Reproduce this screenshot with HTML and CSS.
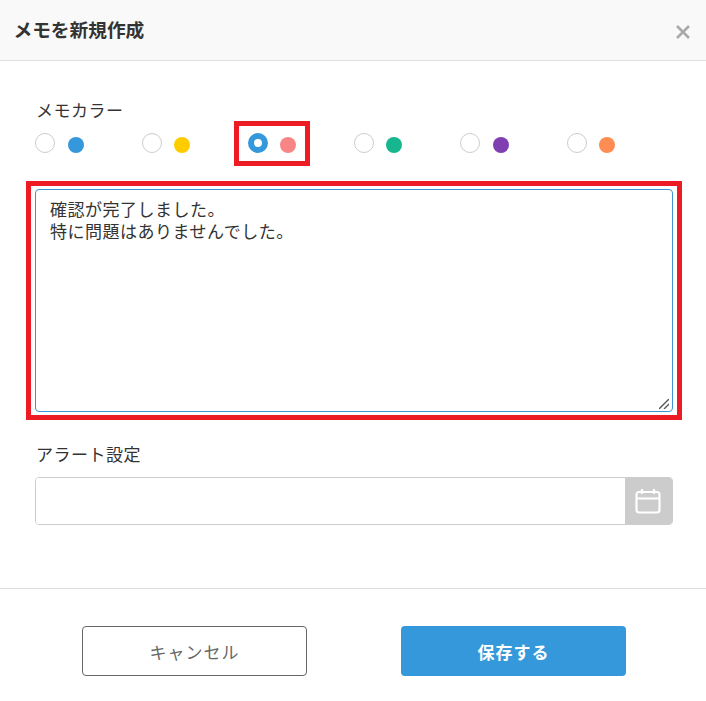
FILE: index.html
```html
<!DOCTYPE html>
<html lang="ja">
<head>
  <meta charset="UTF-8" />
  <meta name="viewport" content="width=device-width, initial-scale=1.0" />
  <title>メモを新規作成</title>
  <link rel="stylesheet" href="styles.css">
</head>
<body>
  <div class="modal">
    <div class="modal-header">
      <h1>メモを新規作成</h1>
      <svg class="close" viewBox="0 0 14 14" width="14" height="14"><path d="M1 1L13 13M13 1L1 13" /></svg>
    </div>

    <div class="modal-body">
      <div class="field-label">メモカラー</div>
      <div class="colors">
        <label class="color"><span class="radio"></span><span class="dot blue"></span></label>
        <label class="color"><span class="radio"></span><span class="dot yellow"></span></label>
        <label class="color"><span class="radio checked"></span><span class="dot pink"></span></label>
        <label class="color"><span class="radio"></span><span class="dot green"></span></label>
        <label class="color"><span class="radio"></span><span class="dot purple"></span></label>
        <label class="color"><span class="radio"></span><span class="dot orange"></span></label>
      </div>

      <div class="memo-wrap">
        <textarea class="memo">確認が完了しました。
特に問題はありませんでした。</textarea>
        <svg class="grip" viewBox="0 0 10 10" width="10" height="10"><path d="M0 10L10 0M5 10L10 5" /></svg>
      </div>

      <div class="field-label alert-label">アラート設定</div>
      <div class="date-input">
        <input type="text" />
        <span class="calendar">
          <svg viewBox="0 0 26 26" width="26" height="26">
            <rect x="1.5" y="4" width="23" height="20.5" rx="2.5" />
            <path d="M1.5 10.5H24.5M7 1V6M19 1V6" />
          </svg>
        </span>
      </div>
    </div>

    <div class="modal-footer">
      <button class="btn cancel">キャンセル</button>
      <button class="btn save">保存する</button>
    </div>

    <!-- red annotation frames -->
    <div class="mark mark-radio"></div>
    <div class="mark mark-memo"></div>
  </div>
</body>
</html>
```

FILE: styles.css
```css
* {
  box-sizing: border-box;
}

body {
  font-family: "Noto Sans CJK JP", "Noto Sans", sans-serif;
  background-color: #fff;
  color: #333;
  margin: 0;
}

.modal {
  position: relative;
  width: 706px;
  height: 701px;
  overflow: hidden;
}

.modal-header {
  height: 61px;
  padding: 0 16px 3px 13.5px;
  background-color: #f9f9f9;
  border-bottom: 1px solid #ddd;
  display: flex;
  align-items: center;
  justify-content: space-between;
}

.modal-header h1 {
  margin: 0;
  font-size: 18.7px;
  font-weight: 700;
  color: #333;
}

.close {
  margin-top: 7px;
  fill: none;
  stroke: #aaa;
  stroke-width: 2.6;
}

.modal-body {
  padding: 37px 33px 0 35px;
  height: 528px;
  border-bottom: 1px solid #ddd;
}

.field-label {
  font-size: 17px;
  line-height: 24px;
  letter-spacing: 0.5px;
  padding-left: 1px;
}

.colors {
  display: grid;
  grid-template-columns: repeat(6, 1fr);
  height: 24px;
  margin-top: 10px;
  padding-left: 0.3px;
}

.color {
  display: flex;
  align-items: center;
  gap: 12.3px;
}

.radio {
  width: 20px;
  height: 20px;
  border-radius: 50%;
  border: 1.5px solid #ccc;
  background-color: #fff;
  margin-top: -2px;
}

.radio.checked {
  border: 6px solid #3498db;
}

.dot {
  width: 16px;
  height: 16px;
  border-radius: 50%;
  margin-top: 2px;
}

.blue { background-color: #3498db; }
.yellow { background-color: #ffcc00; }
.pink { background-color: #f78585; }
.green { background-color: #16b78f; }
.purple { background-color: #7f3fb0; }
.orange { background-color: #ff8c52; }

.memo-wrap {
  position: relative;
  width: 638px;
  height: 223px;
  margin-top: 33px;
}

.memo {
  display: block;
  width: 100%;
  height: 100%;
  padding: 8px 14px;
  border: 1px solid #3d94d0;
  border-radius: 4px;
  font-family: inherit;
  font-size: 17px;
  line-height: 21.5px;
  letter-spacing: 0.5px;
  color: #333;
  outline: none;
  resize: none;
}

.grip {
  position: absolute;
  right: 4px;
  bottom: 3px;
  fill: none;
  stroke: #555;
  stroke-width: 1.4;
}

.alert-label {
  margin-top: 30px;
}

.date-input {
  display: flex;
  width: 638px;
  height: 48px;
  margin-top: 11px;
  border: 1px solid #ccc;
  border-radius: 4px;
  overflow: hidden;
}

.date-input input {
  flex: 1;
  min-width: 0;
  border: none;
  outline: none;
}

.calendar {
  width: 48px;
  margin: -1px -1px -1px 0;
  padding-right: 2px;
  background-color: #ccc;
  display: flex;
  align-items: center;
  justify-content: center;
}

.calendar svg {
  fill: none;
  stroke: #fff;
  stroke-width: 2.2;
}

.modal-footer {
  display: flex;
  justify-content: center;
  gap: 94px;
  padding: 37px 0 0 2px;
}

.btn {
  width: 225px;
  height: 50px;
  border-radius: 4px;
  font-family: inherit;
  font-size: 17px;
  letter-spacing: 1px;
  cursor: pointer;
}

.cancel {
  background-color: #fff;
  border: 1px solid #666;
  color: #666;
  padding-left: 6px;
}

.save {
  background-color: #3498db;
  border: none;
  color: #fff;
  font-weight: 700;
}

.mark {
  position: absolute;
  border: 5px solid #ed1c24;
  pointer-events: none;
}

.mark-radio {
  left: 234px;
  top: 121px;
  width: 76px;
  height: 45px;
}

.mark-memo {
  left: 26px;
  top: 181px;
  width: 656px;
  height: 239px;
}
```
